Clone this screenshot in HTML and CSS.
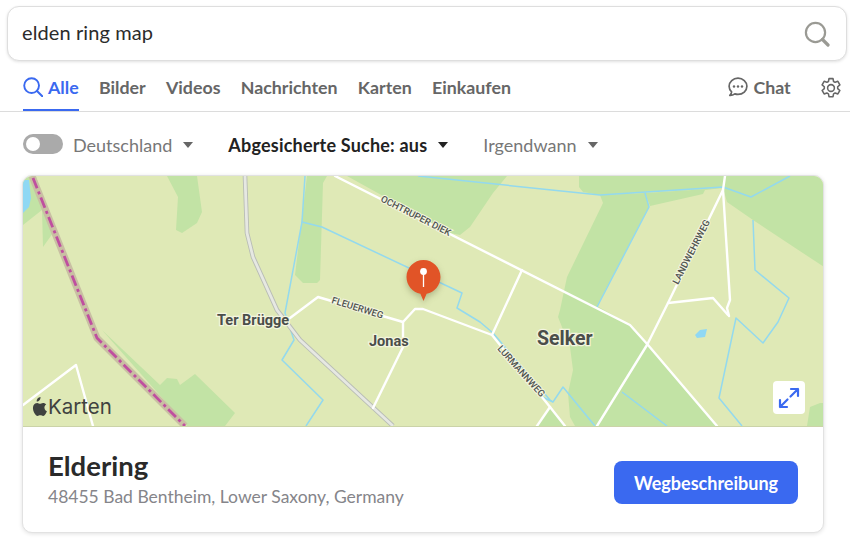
FILE: index.html
```html
<!DOCTYPE html>
<html lang="de">
<head>
<meta charset="utf-8">
<title>elden ring map</title>
<link rel="stylesheet" href="styles.css">
</head>
<body>
<div class="search">
  <span class="query">elden ring map</span>
  <svg class="search-icon" width="26" height="26" viewBox="0 0 26 26"><circle cx="11.5" cy="11.5" r="9.6" fill="none" stroke="#9a9a94" stroke-width="2.2"/><path d="M18.5 18.5L24 24" stroke="#9a9a94" stroke-width="3.2" stroke-linecap="round"/></svg>
</div>
<nav class="tabs">
  <a class="tab active"><svg width="20" height="20" viewBox="0 0 20 20"><circle cx="8.6" cy="8.6" r="7.4" fill="none" stroke="#3a69f0" stroke-width="1.9"/><path d="M14 14L19.3 19.3" stroke="#3a69f0" stroke-width="2" stroke-linecap="round"/></svg>Alle</a>
  <a class="tab">Bilder</a>
  <a class="tab">Videos</a>
  <a class="tab">Nachrichten</a>
  <a class="tab">Karten</a>
  <a class="tab">Einkaufen</a>
  <a class="tab chat"><svg width="20" height="20" viewBox="0 0 20 20"><path d="M10 1.2c-4.9 0-8.9 3.6-8.9 8.1 0 2.2 1 4.2 2.5 5.6-.1 1.300-.7 2.500-1.800 3.500 1.900.1 3.700-.5 5-1.500.9.3 2 .5 3.200.5 4.900 0 8.900-3.600 8.900-8.100S14.900 1.200 10 1.200z" fill="none" stroke="#666" stroke-width="1.700" stroke-linejoin="round"/><circle cx="6" cy="9.500" r="1.200" fill="#666"/><circle cx="10" cy="9.500" r="1.200" fill="#666"/><circle cx="14" cy="9.500" r="1.200" fill="#666"/></svg>Chat</a>
  <a class="gear"><svg width="22" height="22" viewBox="0 0 24 24"><path d="M9.800 1.800h4.400l.6 3.100 1.700.9 3-1.100 2.200 3.800-2.400 2.100v2l2.400 2.100-2.200 3.800-3-1.100-1.700 1-.6 3.100H9.800l-.6-3.100-1.700-1-3 1.100-2.200-3.800 2.400-2.100v-2L2.300 8.500l2.200-3.800 3 1.100 1.700-.9z" fill="none" stroke="#666" stroke-width="1.700" stroke-linejoin="round"/><circle cx="12" cy="12" r="3.700" fill="none" stroke="#666" stroke-width="1.700"/></svg></a>
</nav>
<div class="filters">
  <span class="toggle"><span class="knob"></span></span>
  <span class="filter region">Deutschland<i class="caret"></i></span>
  <span class="filter safe">Abgesicherte Suche: aus<i class="caret"></i></span>
  <span class="filter time">Irgendwann<i class="caret"></i></span>
</div>
<section class="card">
  <div class="map">
    <svg class="map-art" width="801" height="250" viewBox="23 176 801 250">
      <rect x="23" y="176" width="801" height="250" fill="#dfe9b6"/>
      <g fill="#c2e3a5">
        <path d="M23 225L42 210 43 247 53 233 36 176H23z"/>
        <path d="M167 176H197L202 212 197 223 182 233 176 230 178 197z"/>
        <path d="M102 330L160 385 167 378 177 379 180 385 195 374 235 413 225 426H187z"/>
        <path d="M307 176H327L323 183 320 280 317 283H303L295 275z"/>
        <path d="M347 176H507L493 193 470 227 460 235 450 233z"/>
        <path d="M579 176V187L583 192 600 195 603 203 567 277 560 310 558 317 570 347 573 370 568 393 570 417 575 426H717L647 343 630 325 597 306 649 207 645 193 600 195 723 188 705 190 703 194 650 206 645 193 723 188 727 202 753 220 824 267V176z"/>
        <path d="M807 426L810 407 820 403H824V426z"/>
        <path d="M537 426L550 407 565 426z"/>
      </g>
      <path d="M23 180H29L31 198 29 207 23 213z" fill="#8fd8f4"/>
      <path d="M695 335L700 330 707 329 705 337 697 338z" fill="#8fd8f4"/>
      <g fill="none" stroke="#93d9ee" stroke-width="1.500" stroke-linejoin="round">
        <path d="M305 176L302 222 285 313 294 340 282 360 323 400 306 426"/>
        <path d="M302 222L322 227 462 293 457 308 480 322 493 333 550 400 553 402 563 387 595 426"/>
        <path d="M418 176L600 195 723 187 751 197 790 176"/>
        <path d="M645 193L649 207 597 307"/>
        <path d="M622 392L667 426"/>
        <path d="M753 220L755 270 789 298 778 322 763 343 736 318 719 398 742 426"/>
        <path d="M553 402L540 396"/>
      </g>
      <path d="M245 176L247 233 253 257 277 310 300 340 393 426" fill="none" stroke="#b9bdb6" stroke-width="4.600"/>
      <path d="M245 176L247 233 253 257 277 310 300 340 393 426" fill="none" stroke="#e6e8e2" stroke-width="2.800"/>
      <g fill="none" stroke="#fff" stroke-width="2.400" stroke-linejoin="round" stroke-linecap="round">
        <path d="M23 405L76 365 93 426"/>
        <path d="M335 176L630 325 648 345 717 426"/>
        <path d="M725 176L723 190 668 303 647 345 597 426"/>
        <path d="M723 190L730 300 727 308 729 316"/>
        <path d="M668 303L713 298 728 315"/>
        <path d="M522 270L492 335 550 407 565 426"/>
        <path d="M550 407L537 426"/>
        <path d="M290 318L318 297 403 322 415 309 423 309 492 335"/>
        <path d="M403 322L403 347 373 408"/>
      </g>
      <path d="M32 176L97 338 185 426" fill="none" stroke="#c9bfa3" stroke-width="7"/>
      <path d="M33 178L97 338 185 426" fill="none" stroke="#bf4f9f" stroke-width="2.800" stroke-dasharray="11 3.500 3 3.500"/>
      <g class="street">
        <text transform="translate(380 201) rotate(27)">OCHTRUPER DIEK</text>
        <text transform="translate(331 303) rotate(17)">FLEUERWEG</text>
        <text transform="translate(497 349) rotate(48)">LURMANNWEG</text>
        <text transform="translate(678 285) rotate(-63)">LANDWEHRWEG</text>
      </g>
      <text class="place" x="217" y="325">Ter Brügge</text>
      <text class="place" x="369" y="346">Jonas</text>
      <text class="place big" x="537" y="345">Selker</text>
      <g class="pin">
        <path d="M423.500 260c-9.400 0-17 7.600-17 17 0 8.300 6 15.300 13.900 16.700L423.500 301l3.100-7.300c7.900-1.400 13.900-8.400 13.900-16.700 0-9.400-7.600-17-17-17z" fill="#e15427"/>
        <path d="M423.500 272V287" stroke="#fff" stroke-width="1.300"/>
        <circle cx="423.500" cy="271.500" r="3.400" fill="#fff"/>
      </g>
      <path transform="translate(-5 .5)" d="M44.500 399.700c.9-1.100 1.100-2.100 1-3.200-1.100.1-2.200.7-2.900 1.600-.6.800-1 1.800-.9 2.900 1.100.1 2.100-.5 2.800-1.300zM49.400 407.300c0-2.200 1.700-3.100 1.800-3.200-1-1.500-2.500-1.700-3-1.700-1.300-.1-2.600.8-3.200.8-.7 0-1.700-.8-2.800-.8-1.400 0-2.800.9-3.500 2.100-1.500 2.700-.4 6.600 1.100 8.700.7 1.100 1.600 2.200 2.700 2.200 1.100 0 1.500-.7 2.800-.7 1.300 0 1.700.7 2.800.7 1.200 0 1.900-1.100 2.600-2.100.8-1.200 1.200-2.400 1.200-2.500-.1 0-2.500-1-2.500-3.500z" fill="#3f4240"/>
      <text class="brand" x="48" y="414">Karten</text>
    </svg>
    <button class="expand" type="button" aria-label="Karte vergrößern"><svg width="22" height="22" viewBox="0 0 22 22"><path d="M20 2L12.500 9.500M13 2H20V9M2 20L9.500 12.500M2 13V20H9" fill="none" stroke="#3a69f0" stroke-width="2.200" stroke-linecap="round" stroke-linejoin="round"/></svg></button>
  </div>
  <div class="info">
    <div class="details">
      <h2 class="name">Eldering</h2>
      <p class="address">48455 Bad Bentheim, Lower Saxony, Germany</p>
    </div>
    <a class="route">Wegbeschreibung</a>
  </div>
</section>
</body>
</html>
```
FILE: styles.css
```css
* { box-sizing: border-box; }
html, body { margin: 0; background: #fff; }
body { width: 850px; height: 552px; overflow: hidden; font-family: "Lato", "Liberation Sans", sans-serif; color: #222; padding-top: 6px; }

.search { margin: 0 3px 0 7px; height: 55px; display: flex; align-items: center; justify-content: space-between; padding: 0 16px 0 14px; border: 1px solid #dedede; border-radius: 12px; box-shadow: 0 1px 3px rgba(0,0,0,.12); background: #fff; }
.query { font-size: 20px; color: #2b2b2b; letter-spacing: .1px; padding-bottom: 3px; }

.tabs { height: 51px; display: flex; align-items: stretch; gap: 20.300px; padding: 0 8px 0 23px; border-bottom: 1px solid #dcdcdc; }
.tab { display: flex; align-items: center; gap: 5px; font-size: 17.800px; font-weight: 700; color: #666; padding-top: 1px; }
.tab.active { color: #3a69f0; box-shadow: inset 0 -2px 0 #3a69f0; }
.chat { margin-left: auto; }
.gear { display: flex; align-items: center; margin-left: 9px; padding: 3px 0 0; }

.filters { height: 63px; display: flex; align-items: center; padding: 1px 0 0 23px; }
.toggle { width: 40px; height: 20px; border-radius: 10px; background: #aaa; padding: 3px; margin-right: 10px; }
.knob { display: block; width: 14px; height: 14px; border-radius: 50%; background: #fff; }
.filter { display: flex; align-items: center; font-size: 18px; color: #777; padding-top: 2px; }
.safe { font-weight: 700; color: #222; margin-left: 35px; letter-spacing: .2px; }
.time { margin-left: 35px; }
.caret { width: 0; height: 0; margin-left: 11px; border: 5px solid transparent; border-top: 6px solid currentColor; border-bottom: 0; }
.region .caret, .time .caret { color: #666; }

.card { margin: 0 26px 0 22px; height: 358px; border: 1px solid #e2e2e2; border-radius: 10px; box-shadow: 0 1px 4px rgba(0,0,0,.12); overflow: hidden; background: #fff; }
.map { position: relative; height: 251px; border-bottom: 1px solid #cbd3a8; }
.map-art { display: block; }
.street text { font: 500 9.500px "Roboto", sans-serif; fill: #4f5350; stroke: #f3f5df; stroke-width: 2px; paint-order: stroke; }
.place { font: 700 14.500px "Roboto", sans-serif; fill: #4a4e4a; stroke: #f3f5df; stroke-width: 2.500px; paint-order: stroke; }
.place.big { font-size: 19.500px; }
.pin { filter: drop-shadow(0 3px 3px rgba(70,70,30,.3)); }
.brand { font: 400 20.500px "Inter", "Roboto", sans-serif; fill: #3f4240; }
.expand { position: absolute; left: 750px; top: 205px; width: 32px; height: 33px; padding: 0; border: 0; border-radius: 4px; background: #fff; display: flex; align-items: center; justify-content: center; }

.info { display: flex; align-items: flex-start; justify-content: space-between; padding: 24px 25px 0; }
.name { margin: 0 0 5px; font-size: 27.500px; font-weight: 700; color: #2a2a2a; line-height: 30px; }
.address { margin: 0; font-size: 17.500px; color: #85858a; line-height: 21px; }
.route { width: 184px; height: 43px; margin-top: 10px; display: flex; align-items: center; justify-content: center; border-radius: 8px; background: #3a69f0; color: #fff; font-size: 18px; font-weight: 700; }
```
